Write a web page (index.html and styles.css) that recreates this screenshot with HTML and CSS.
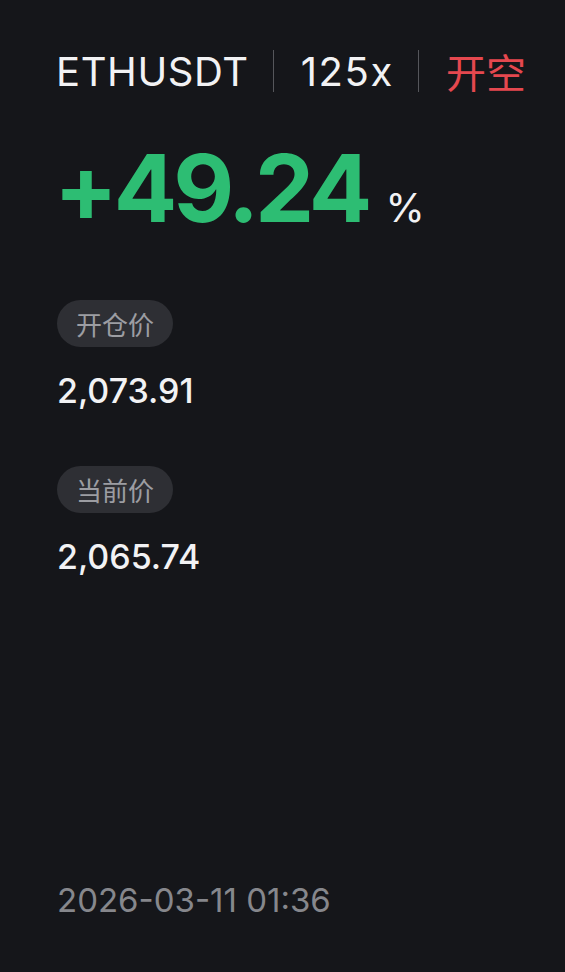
FILE: index.html
```html
<!DOCTYPE html>
<html lang="zh">
<head>
<meta charset="utf-8">
<link rel="stylesheet" href="styles.css">
</head>
<body>
<div class="page">
  <div class="header">
    <span class="sym">ETHUSDT</span>
    <span class="sep"></span>
    <span class="lev">125x</span>
    <span class="sep"></span>
    <span class="side">开空</span>
  </div>
  <div class="pnl"><span class="num">+49.24</span><span class="pct">%</span></div>
  <div class="block first">
    <span class="pill">开仓价</span>
    <div class="val">2,073.91</div>
  </div>
  <div class="block">
    <span class="pill">当前价</span>
    <div class="val">2,065.74</div>
  </div>
  <div class="spacer"></div>
  <div class="date">2026-03-11 01:36</div>
</div>
</body>
</html>
```
FILE: styles.css
```css
html, body {
  margin: 0;
  padding: 0;
  background: #15161a;
}
body {
  font-family: Inter, "Noto Sans CJK SC", sans-serif;
  color: #f2f2f4;
}
.page {
  width: 565px;
  height: 972px;
  box-sizing: border-box;
  padding: 46px 0 52px 58px;
  display: flex;
  flex-direction: column;
}
.header {
  display: flex;
  align-items: center;
  height: 50px;
  margin-left: -2px;
  font-size: 40px;
  font-weight: 400;
  letter-spacing: 0.6px;
}
.lev {
  letter-spacing: 1.6px;
}
.sep {
  width: 1px;
  height: 42px;
  background: #55565b;
  margin: 0 27px 0 24px;
}
.side {
  color: #e5484f;
  font-family: "Noto Sans CJK SC", sans-serif;
  font-size: 40px;
  letter-spacing: 0;
}
.pnl {
  margin-top: 44px;
  margin-left: -4px;
  display: flex;
  align-items: baseline;
  height: 96px;
}
.num {
  font-size: 94px;
  font-weight: 700;
  color: #2dbd73;
  letter-spacing: -4px;
  line-height: 96px;
}
.pct {
  font-size: 40px;
  margin-left: 17px;
  color: #f2f2f4;
}
.block {
  display: flex;
  flex-direction: column;
  align-items: flex-start;
  margin-top: 55px;
}
.block.first {
  margin-top: 64px;
}
.pill {
  background: #2e2f34;
  color: #9c9da2;
  font-family: "Noto Sans CJK SC", sans-serif;
  font-size: 26px;
  height: 47px;
  line-height: 47px;
  padding: 0 19px;
  border-radius: 24px;
  margin-left: -1px;
}
.val {
  margin-top: 24px;
  margin-left: -1px;
  font-size: 34px;
  font-weight: 500;
  line-height: 40px;
}
.spacer {
  flex: 1;
}
.date {
  font-size: 33px;
  margin-left: -1px;
  color: #86878c;
  line-height: 40px;
}
```
